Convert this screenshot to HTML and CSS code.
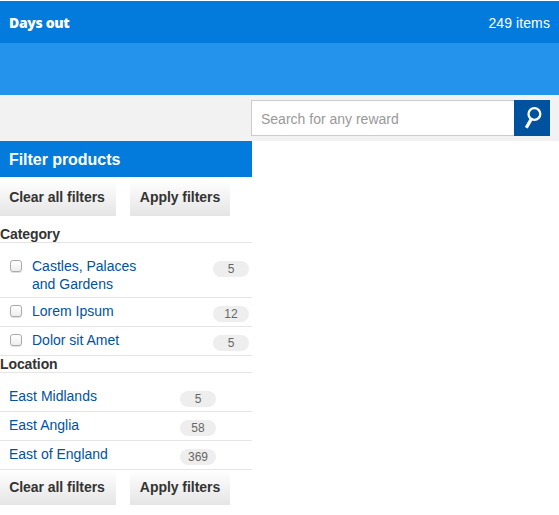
FILE: index.html
```html
<!DOCTYPE html>
<html lang="en">
<head>
<meta charset="utf-8">
<title>Days out</title>
<link rel="stylesheet" href="styles.css">
</head>
<body>
<header class="topbar">
  <h1 class="title">Days out</h1>
  <span class="total">249 items</span>
</header>
<div class="banner"></div>
<form class="search">
  <input class="search-input" type="text" placeholder="Search for any reward">
  <button class="search-button" type="button" aria-label="Search">
    <svg width="36" height="36" viewBox="0 0 36 36" fill="none" stroke="#fff">
      <circle cx="20.4" cy="14" r="5.9" stroke-width="2.3"/>
      <path d="M17 19.5L12.3 27.7" stroke-width="3.3"/>
    </svg>
  </button>
</form>
<aside class="filters">
  <h2 class="filters-title">Filter products</h2>
  <div class="actions">
    <button class="action clear" type="button">Clear all filters</button>
    <button class="action apply" type="button">Apply filters</button>
  </div>
  <h3 class="group-title category">Category</h3>
  <ul class="list checks">
    <li class="row first"><input class="check" type="checkbox"><a class="name">Castles, Palaces and Gardens</a><span class="count">5</span></li>
    <li class="row"><input class="check" type="checkbox"><a class="name">Lorem Ipsum</a><span class="count">12</span></li>
    <li class="row"><input class="check" type="checkbox"><a class="name">Dolor sit Amet</a><span class="count">5</span></li>
  </ul>
  <h3 class="group-title">Location</h3>
  <ul class="list places">
    <li class="row first"><a class="name">East Midlands</a><span class="count">5</span></li>
    <li class="row"><a class="name">East Anglia</a><span class="count">58</span></li>
    <li class="row"><a class="name">East of England</a><span class="count">369</span></li>
  </ul>
  <div class="actions bottom">
    <button class="action clear" type="button">Clear all filters</button>
    <button class="action apply" type="button">Apply filters</button>
  </div>
</aside>
</body>
</html>
```
FILE: styles.css
```css
* { box-sizing: border-box; }
body {
  margin: 0;
  padding-top: 1px;
  background: #fff;
  color: #333;
  font: 14px/18px "Liberation Sans", Arial, sans-serif;
}
h1, h2, h3, ul { margin: 0; padding: 0; }
.topbar {
  display: flex;
  justify-content: space-between;
  align-items: center;
  height: 42px;
  padding: 1px 9px 0;
  background: #037bdc;
  color: #fff;
}
.title {
  font: 800 14px/18px "Open Sans", "Noto Sans", sans-serif;
  letter-spacing: -0.35px;
}
.total { letter-spacing: 0.1px; }
.banner { height: 52px; background: #2493ec; }
.search {
  display: flex;
  justify-content: flex-end;
  height: 46px;
  padding: 5px 9px 5px 0;
  background: #f2f2f2;
}
.search-input {
  width: 263px;
  height: 36px;
  padding: 2px 9px 0;
  border: 1px solid #ccc;
  border-right: 0;
  border-radius: 0;
  background: #fff;
  font: inherit;
  outline: 0;
}
.search-input::placeholder { color: #999; opacity: 1; }
.search-button {
  width: 36px;
  height: 36px;
  padding: 0;
  border: 0;
  background: #00529f;
}
.search-button svg { display: block; }
.filters { width: 252px; }
.filters-title {
  height: 36px;
  padding-left: 9px;
  background: #037bdc;
  color: #fff;
  font-size: 16px;
  line-height: 37px;
  letter-spacing: -0.05px;
}
.actions { display: flex; gap: 14px; padding-top: 3px; }
.actions.bottom { padding-top: 0; }
.bottom .action { height: 35px; }
.action {
  height: 36px;
  padding: 0 0 2px;
  border: 0;
  background: linear-gradient(#fff, #e5e5e5);
  color: #333;
  font: bold 14px/18px "Liberation Sans", Arial, sans-serif;
  letter-spacing: -0.05px;
}
.clear { width: 116px; padding-right: 2px; }
.apply { width: 100px; }
.group-title {
  height: 17px;
  border-bottom: 1px solid #e5e5e5;
  font-size: 14px;
  line-height: 17px;
  letter-spacing: -0.1px;
}
.category { margin-top: 10px; }
.list { list-style: none; }
.row {
  display: flex;
  align-items: flex-start;
  height: 29px;
  padding: 4px 3px 0 9px;
  border-bottom: 1px solid #e5e5e5;
}
.name { color: #00529f; }
.checks .name { width: 125px; }
.checks .first { height: 55px; padding-top: 14px; }
.places .row { padding-right: 36px; }
.places .first { height: 39px; padding-top: 14px; }
.check {
  appearance: none;
  width: 12px;
  height: 12px;
  margin: 3px 10px 0 1px;
  border: 1px solid #aaa;
  border-radius: 3px;
  background: linear-gradient(#fff, #eee);
  box-shadow: 0 1px 1px #ddd;
}
.count {
  width: 36px;
  height: 16px;
  margin: 4px 0 0 auto;
  border-radius: 8px;
  background: #eee;
  color: #666;
  font-size: 12px;
  line-height: 17px;
  text-align: center;
}
```
